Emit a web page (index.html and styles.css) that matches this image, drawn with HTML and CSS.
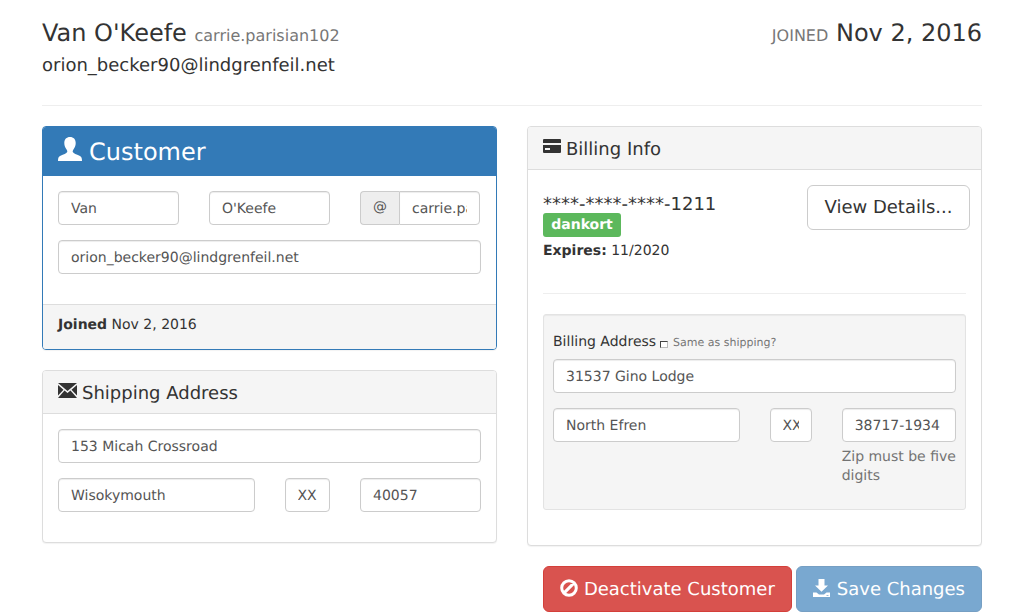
FILE: index.html
```html
<!DOCTYPE html>
<html lang="en">
<head>
<meta charset="utf-8">
<title>Customer</title>
<link rel="stylesheet" href="styles.css">
</head>
<body>
<div class="container">
  <header class="page-head">
    <div>
      <h2 class="name">Van O'Keefe <small>carrie.parisian102</small></h2>
      <div class="email">orion_becker90@lindgrenfeil.net</div>
    </div>
    <div class="joined"><small>JOINED</small> Nov 2, 2016</div>
  </header>
  <hr class="rule">
  <main class="columns">
    <div class="col">
      <section class="panel panel-primary">
        <div class="panel-heading big">
          <svg class="icon icon-big" viewBox="0 0 24 24"><path fill="currentColor" d="M0 24c0-3 .6-4.500 2.500-5.300 3-1.300 6-2 6.700-3.700.3-.9-.1-1.700-.8-2.700C7 10.300 6.300 8.300 6.300 6 6.300 2.300 8.500 0 12 0s5.700 2.300 5.700 6c0 2.300-.7 4.300-2.100 6.300-.7 1-1.100 1.800-.8 2.700.7 1.700 3.700 2.400 6.700 3.700 1.900.8 2.500 2.300 2.500 5.300z"/></svg>
          Customer
        </div>
        <div class="panel-body">
          <div class="row">
            <div class="c4"><input class="field" value="Van"></div>
            <div class="c4"><input class="field" value="O'Keefe"></div>
            <div class="c4">
              <div class="input-group"><span class="addon">@</span><input class="field" value="carrie.parisian102"></div>
            </div>
          </div>
          <div class="stack"><input class="field" value="orion_becker90@lindgrenfeil.net"></div>
        </div>
        <div class="panel-footer"><b>Joined</b> Nov 2, 2016</div>
      </section>
      <section class="panel">
        <div class="panel-heading">
          <svg class="icon icon-mail" viewBox="0 0 19 15"><path fill="currentColor" d="M0 0h19L9.500 8zM0 2l5.500 4.700L0 12.500zM19 2v10.500l-5.500-5.800zM6.500 7.600l3 2.500 3-2.500L19 15H0z"/></svg>
          Shipping Address
        </div>
        <div class="panel-body">
          <div class="stack"><input class="field" value="153 Micah Crossroad"></div>
          <div class="row">
            <div class="c6"><input class="field" value="Wisokymouth"></div>
            <div class="c2"><input class="field" value="XX"></div>
            <div class="c4"><input class="field" value="40057"></div>
          </div>
        </div>
      </section>
    </div>
    <div class="col">
      <section class="panel billing">
        <div class="panel-heading">
          <svg class="icon icon-card" viewBox="0 0 18 14"><path fill="currentColor" fill-rule="evenodd" d="M1 0h16a1 1 0 0 1 1 1v3H0V1a1 1 0 0 1 1-1zM0 6h18v7a1 1 0 0 1-1 1H1a1 1 0 0 1-1-1zm2 3v2h5V9z"/></svg>
          Billing Info
        </div>
        <div class="panel-body billing-body">
          <div class="card-row">
            <div class="card-info">
              <div class="card-number">****-****-****-1211</div>
              <span class="label">dankort</span>
              <div class="expires"><b>Expires:</b> 11/2020</div>
            </div>
            <button class="btn btn-default" type="button">View Details...</button>
          </div>
          <hr class="rule inner">
          <div class="well">
            <div class="address-label">Billing Address <input class="same" type="checkbox"> <small>Same as shipping?</small></div>
            <div class="stack"><input class="field" value="31537 Gino Lodge"></div>
            <div class="row">
              <div class="c6"><input class="field" value="North Efren"></div>
              <div class="c2"><input class="field" value="XX"></div>
              <div class="c4"><input class="field" value="38717-1934"><span class="help">Zip must be five digits</span></div>
            </div>
          </div>
        </div>
      </section>
    </div>
  </main>
  <footer class="actions">
    <button class="btn btn-danger" type="button">
      <svg class="icon icon-btn" viewBox="0 0 18 18"><path fill="none" stroke="currentColor" stroke-width="3" d="M9 1.700a7.300 7.300 0 1 0 0 14.600A7.300 7.300 0 0 0 9 1.700zM3.900 14.100 14.100 3.900"/></svg>
      Deactivate Customer
    </button>
    <button class="btn btn-primary" type="button">
      <svg class="icon icon-btn" viewBox="0 0 18 18"><path fill="currentColor" fill-rule="evenodd" d="M5.500 0h6v6.500h3.500l-6.500 6.300L2 6.500h3.500zM0 13.500h3.500l2.500 2h5l2.500-2H17V18H0zm13.500 2.500v.8h2V16z"/></svg>
      Save Changes
    </button>
  </footer>
</div>
</body>
</html>
```
FILE: styles.css
```css
* { box-sizing: border-box; }
html, body { margin: 0; height: 612px; overflow: hidden; }
body {
  font-family: "DejaVu Sans", sans-serif;
  font-size: 14px;
  line-height: 20px;
  color: #333;
  background: #fff;
  text-rendering: geometricPrecision;
}
.container { width: 940px; margin-left: 42px; }
.page-head { display: flex; justify-content: space-between; align-items: flex-start; padding: 20px 0 7px; }
.name { margin: 0; font-size: 24px; line-height: 26px; font-weight: 400; }
.name small { font-size: 16px; color: #777; }
.email { margin-top: 4px; font-size: 18px; line-height: 25px; }
.joined { font-size: 24px; line-height: 26px; }
.joined small { font-size: 16px; color: #777; }
.rule { border: 0; border-top: 1px solid #eee; margin: 20px 0; }
.columns { display: flex; gap: 30px; align-items: flex-start; }
.col { width: 455px; }
.panel {
  background: #fff;
  border: 1px solid #ddd;
  border-radius: 4px;
  margin-bottom: 20px;
  box-shadow: 0 1px 1px rgba(0,0,0,.05);
}
.panel-heading {
  display: flex;
  align-items: center;
  gap: 5px;
  height: 43px;
  padding: 4px 15px 0;
  font-size: 18px;
  background: #f5f5f5;
  border-bottom: 1px solid #ddd;
  border-radius: 3px 3px 0 0;
}
.panel-primary { border-color: #337ab7; }
.panel-primary .panel-heading { background: #337ab7; color: #fff; border-color: #337ab7; }
.panel-heading.big { height: 49px; padding-top: 2px; font-size: 24px; gap: 7px; }
.panel-heading.big .icon-big { margin-top: -7px; }
.panel-body { padding: 15px; }
.panel-footer {
  height: 45px;
  padding: 10px 15px;
  background: #f5f5f5;
  border-top: 1px solid #ddd;
  border-radius: 0 0 3px 3px;
}
.icon { display: block; flex: none; }
.icon-big { width: 24px; height: 24px; }
.icon-mail { width: 19px; height: 15px; margin-top: -7px; }
.icon-card { width: 18px; height: 14px; margin-top: -8px; }
.icon-btn { width: 18px; height: 18px; margin-top: -5px; }
.row { display: grid; grid-template-columns: repeat(12, 1fr); margin: 0 -15px; }
.row > div { padding: 0 15px; margin-bottom: 15px; min-width: 0; }
.c2 { grid-column: span 2; }
.c4 { grid-column: span 4; }
.c6 { grid-column: span 6; }
.stack { margin-bottom: 15px; }
.field {
  display: block;
  width: 100%;
  height: 34px;
  padding: 8px 12px 6px;
  font: inherit;
  text-rendering: inherit;
  color: #555;
  background: #fff;
  border: 1px solid #ccc;
  border-radius: 4px;
  box-shadow: inset 0 1px 1px rgba(0,0,0,.075);
}
.input-group { display: flex; width: 120px; }
.addon {
  flex: none;
  width: 39px;
  height: 34px;
  padding: 5px 0;
  text-align: center;
  color: #555;
  background: #eee;
  border: 1px solid #ccc;
  border-right: 0;
  border-radius: 4px 0 0 4px;
}
.input-group .field { min-width: 0; border-radius: 0 4px 4px 0; }
.billing-body { padding-bottom: 35px; }
.card-row { display: flex; justify-content: space-between; align-items: flex-start; }
.card-info { padding-top: 10px; }
.card-number { font-size: 18px; line-height: 20px; }
.label {
  display: block;
  width: 78px;
  height: 24px;
  margin-top: -2px;
  text-align: center;
  font-weight: 700;
  font-size: 14px;
  line-height: 24px;
  color: #fff;
  background: #5cb85c;
  border-radius: 3px;
}
.expires { margin-top: 3px; padding-top: 1px; margin-bottom: -1px; }
.card-row .btn { margin-right: -4px; width: 163px; height: 45px; padding-top: 0; justify-content: center; }
.btn {
  display: inline-flex;
  align-items: center;
  gap: 6px;
  height: 46px;
  padding: 2px 16px 0;
  font: inherit;
  font-size: 18px;
  text-rendering: inherit;
  border: 1px solid transparent;
  border-radius: 6px;
}
.btn-default { color: #333; background: #fff; border-color: #ccc; margin-top: 0; }
.btn-danger { color: #fff; background: #d9534f; border-color: #d43f3a; }
.btn-primary { color: #fff; background: #337ab7; border-color: #2e6da4; opacity: .65; }
.inner { margin: 33px 0 20px; }
.well {
  padding: 9px;
  height: 196px;
  background: #f5f5f5;
  border: 1px solid #e3e3e3;
  border-radius: 3px;
  box-shadow: inset 0 1px 1px rgba(0,0,0,.05);
}
.address-label { height: 35px; padding-top: 8px; white-space: nowrap; }
.address-label small { font-size: 11px; color: #777; }
.same {
  appearance: none;
  width: 8px;
  height: 7px;
  margin: 0 1px 0 -1px;
  vertical-align: -2px;
  background: #fff;
  border: 1px solid;
  border-color: #444 #bbb #bbb #444;
  border-radius: 0;
}
.help { display: block; margin-top: 6px; color: #737373; line-height: 19px; }
.actions { display: flex; justify-content: flex-end; gap: 4px; margin-top: 0; }
```
